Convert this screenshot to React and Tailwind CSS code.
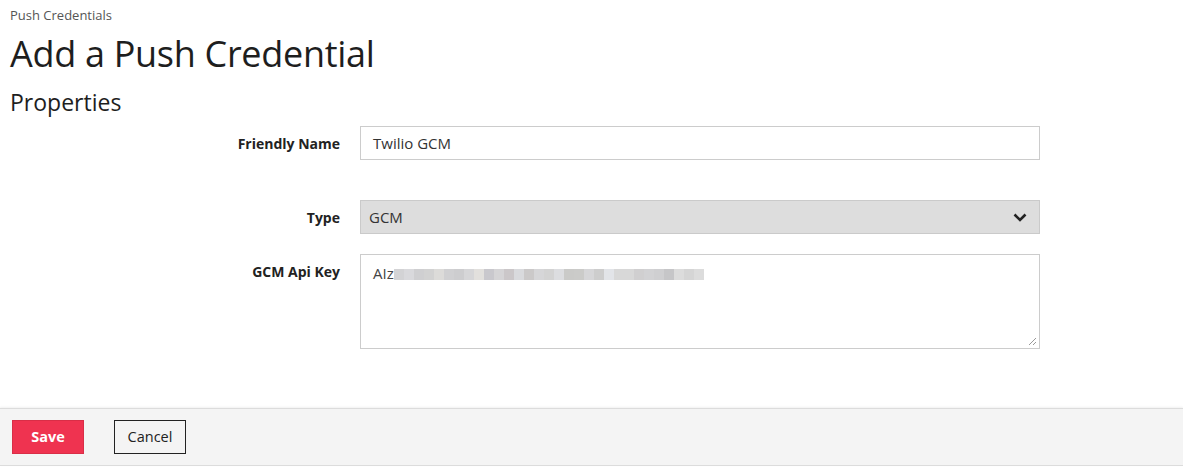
import React from "react";

const blur = [
  "#d3d3d5", "#d9d9dc", "#cfcfd1", "#d2d2d2", "#dcdbd9", "#d0d0d2", "#cdcdcf", "#d6d6d8",
  "#e2e0dd", "#c9c8cd", "#d5d4d6", "#cbc7c9", "#d9dadd", "#cbc9c9", "#d6d6d8", "#d3d3d3",
  "#dcdde0", "#cacac8", "#cbcbc9", "#d6d6d8", "#cdcdcd", "#e2e4e8", "#d8d8d8", "#d8d8d8",
  "#d0cfd0", "#d2d2d4", "#cfcfd1", "#c6c6c8", "#dcdcdc", "#d5d5d5", "#dcdcdc",
];

function Row({ label, children, className = "" }) {
  return (
    <div className={`flex ${className}`}>
      <div className="w-[360px] shrink-0 pr-5 pt-[7px] text-right text-[14px] font-bold text-[#222]">{label}</div>
      <div className="w-[680px]">{children}</div>
    </div>
  );
}

export default function App() {
  return (
    <div className="min-h-[468px] bg-white text-[#222]" style={{ fontFamily: '"Open Sans", sans-serif' }}>
      <div className="px-[10px] pt-[6px]">
        <div className="text-[13px] leading-[18px] text-[#555]">Push Credentials</div>
        <h1 className="mt-[8px] text-[36px] leading-[44px] tracking-[-0.3px] text-[#1e1e1e]">Add a Push Credential</h1>
        <h2 className="mt-[10px] text-[23px] leading-[32px] text-[#1e1e1e]">Properties</h2>
      </div>

      <div className="mt-[8px] flex flex-col">
        <Row label="Friendly Name">
          <div className="flex h-[34px] items-center border border-[#cccccc] px-3 text-[15px] text-[#333]">Twilio GCM</div>
        </Row>
        <Row label="Type" className="mt-[40px]">
          <div className="flex h-[34px] items-center justify-between border border-[#cacaca] bg-[#dddddd] pl-2 pr-[12px] text-[15px] text-[#333]">
            <span>GCM</span>
            <svg width="14" height="9" viewBox="0 0 14 9">
              <polyline points="1.5,1.5 7,7 12.5,1.5" fill="none" stroke="#222" strokeWidth="2.6" />
            </svg>
          </div>
        </Row>
        <Row label="GCM Api Key" className="mt-[20px]">
          <div className="relative h-[95px] border border-[#cccccc] px-3 pt-[7px] text-[15px] text-[#444]">
            <div className="flex items-center">
              <span>AIz</span>
              <span className="mt-[3px] flex h-[11px]">
                {blur.map((c, i) => (
                  <span key={i} style={{ background: c }} className="block h-full w-[10px]" />
                ))}
              </span>
            </div>
            <svg className="absolute bottom-[2px] right-[2px]" width="9" height="9" viewBox="0 0 9 9">
              <line x1="1" y1="8" x2="8" y2="1" stroke="#999" strokeWidth="1" />
              <line x1="5" y1="8" x2="8" y2="5" stroke="#999" strokeWidth="1" />
            </svg>
          </div>
        </Row>
      </div>

      <div className="mt-[59px] flex h-[58px] items-center gap-[30px] border-y border-[#dcdcdc] bg-[#f4f4f4] px-3 shadow-[0_-1px_2px_rgba(0,0,0,0.06)]">
        <button className="h-[34px] w-[72px] border border-[#d92e47] bg-[#ef3350] text-[14.5px] font-bold text-white">Save</button>
        <button className="h-[34px] w-[72px] border border-[#222] bg-[#f4f4f4] text-[14.5px] text-[#222]">Cancel</button>
      </div>
    </div>
  );
}
